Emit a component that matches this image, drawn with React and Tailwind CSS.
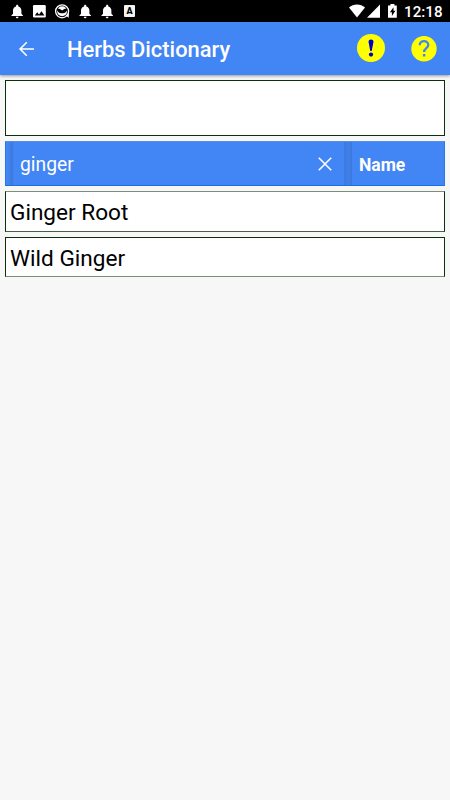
function Bell() {
  return (
    <svg className="h-[22px] w-[22.6px]" viewBox="0 0 22.6 22" fill="#fff">
      <path d="M11.2 4.8c.65 0 1.1.45 1.1 1.1v.5c2 .5 3.1 2.2 3.1 4.2v3.2l1.6 1.7v.6H5.4v-.6L7 13.8v-3.2c0-2 1.1-3.7 3.1-4.2v-.5c0-.65.45-1.1 1.1-1.1zM9.8 16.7h2.8c0 .9-.6 1.5-1.4 1.5s-1.4-.6-1.4-1.5z" />
    </svg>
  );
}

function Picture() {
  return (
    <svg className="h-[22px] w-[22.6px]" viewBox="0 0 22.6 22">
      <rect x="5" y="5" width="12.8" height="12.6" rx="1.3" fill="#fff" />
      <path d="M6.8 15.5l2.4-3.2 1.8 2.1 2.5-3.2 3 4.3z" fill="#000" />
    </svg>
  );
}

function Face() {
  return (
    <svg className="h-[22px] w-[22.6px]" viewBox="0 0 22.6 22">
      <circle cx="11.1" cy="11.3" r="6.5" fill="#000" stroke="#fff" strokeWidth="1.3" />
      <path d="M14.5 15.6l3.4-2.6-.2 4.8z" fill="#fff" />
      <circle cx="11.1" cy="11.3" r="5" fill="#fff" />
      <path d="M6 8.700c1.600-.4 3.400.5 5.100 1.900 1.700-1.400 3.500-2.300 5.100-1.900.2 2.800-2.200 4.600-5.100 4.600S5.800 11.500 6 8.700z" fill="#000" />
    </svg>
  );
}

function LetterBadge() {
  return (
    <div className="flex h-[22px] w-[22.6px] items-center justify-center pr-px">
      <div className="flex h-[12.5px] w-[11px] items-center justify-center rounded-[1px] bg-[#f4f4f4] text-[9px] leading-none font-black text-black">
        A
      </div>
    </div>
  );
}

function StatusBar() {
  return (
    <div className="flex h-[22px] items-center justify-between bg-black pr-[7.5px] pl-[5.8px]">
      <div className="flex">
        <Bell />
        <Picture />
        <Face />
        <Bell />
        <Bell />
        <LetterBadge />
      </div>
      <div className="flex items-center">
        <svg className="h-[22px] w-[55px]" viewBox="349 0 55 22" fill="#fff">
          <path d="M357 17.6L349 7.400c4.400-3.900 11.600-3.900 16 0z" />
          <path d="M380 4.500v13.200h-13z" />
          <path d="M388 5.600h2.400V4.100h4v1.500h2.400v12.200H388z" />
          <path d="M393.500 7.300l-3.600 5h2v3.600l3.500-5.200h-1.900z" fill="#000" />
        </svg>
        <span className="w-[38.5px] pt-[2px] text-[15.2px] leading-5 font-medium whitespace-nowrap text-white">
          12:18
        </span>
      </div>
    </div>
  );
}

function Header() {
  return (
    <header className="flex h-[53px] items-center bg-[#4285f4] pr-[13px] pl-[18px] shadow-[0_1px_3px_rgba(0,0,0,0.4)]">
      <svg className="h-[18px] w-[18px]" viewBox="0 0 18 18" fill="none" stroke="#fff" strokeWidth="1.6">
        <path d="M16 9H2.300M8.800 2.300L2.100 9l6.700 6.700" />
      </svg>
      <h1 className="ml-[31px] flex-1 pt-[2px] text-[21.9px] leading-[26px] font-medium whitespace-nowrap text-white">
        Herbs Dictionary
      </h1>
      <svg className="mb-px h-7 w-7" viewBox="0 0 28 28">
        <circle cx="14" cy="14" r="14" fill="#ff0" />
        <path d="M14 5.500c1.900 0 2.700 1.200 2.400 2.800L14.700 17h-1.400l-1.700-8.700c-.3-1.600.5-2.800 2.400-2.800z" fill="#00c" />
        <circle cx="14" cy="20.600" r="2.100" fill="#00c" />
      </svg>
      <svg className="ml-[26px] h-[26px] w-[26px]" viewBox="0 0 26 26">
        <circle cx="13" cy="12.800" r="12.700" fill="#ff0" />
        <path d="M8.700 9.300c0-5.500 8.600-5.500 8.600-.3 0 3.200-4.200 3.300-4.200 7" fill="none" stroke="#4285f4" strokeWidth="2.300" />
        <rect x="11.900" y="18" width="2.500" height="2.500" fill="#4285f4" />
      </svg>
    </header>
  );
}

function SearchRow() {
  return (
    <div className="flex h-[45px] border border-x-[#2478ee] border-t-[#5590e8] border-b-[#1672e4] bg-[#4285f4] text-white">
      <div className="w-[7px] bg-linear-to-r from-[#4285f4] from-20% to-[#3d78d8]" />
      <div className="flex w-[332px] items-center justify-between pr-[12px] pl-[7px] shadow-[inset_-1px_0_1px_#3d7ae0]">
        <span className="pt-[2px] text-[19.3px] leading-6">ginger</span>
        <svg className="h-4 w-4" viewBox="0 0 16 16" stroke="#fff" strokeWidth="1.6">
          <path d="M1.800 1.800l12.400 12.400M14.200 1.800L1.800 14.200" />
        </svg>
      </div>
      <div className="w-[7px] bg-linear-to-r from-[#3c7ae0] via-[#4080e9] to-[#3d78d8]" />
      <div className="flex flex-1 items-center pt-[3px] pl-[7px] text-[17.5px] leading-6 font-bold">Name</div>
    </div>
  );
}

export default function App() {
  return (
    <div className="flex h-[800px] w-[450px] flex-col overflow-hidden bg-[#f7f7f7] font-['Roboto',sans-serif]">
      <StatusBar />
      <Header />
      <main className="flex flex-col gap-[5px] p-[5px]">
        <div className="h-14 border border-[#0c300c] bg-white" />
        <SearchRow />
        <div className="flex h-[41px] items-center border border-[#0c300c] border-t-[#7b8f78] border-b-[#456043] bg-white pt-[3px] pl-[4px] text-[22.6px] leading-7 text-black">
          Ginger Root
        </div>
        <div className="flex h-[40px] items-center border border-[#0c300c] border-b-[#7b8f78] bg-white pt-[4px] pl-[4px] text-[22.6px] leading-7 text-black">
          Wild Ginger
        </div>
      </main>
    </div>
  );
}
